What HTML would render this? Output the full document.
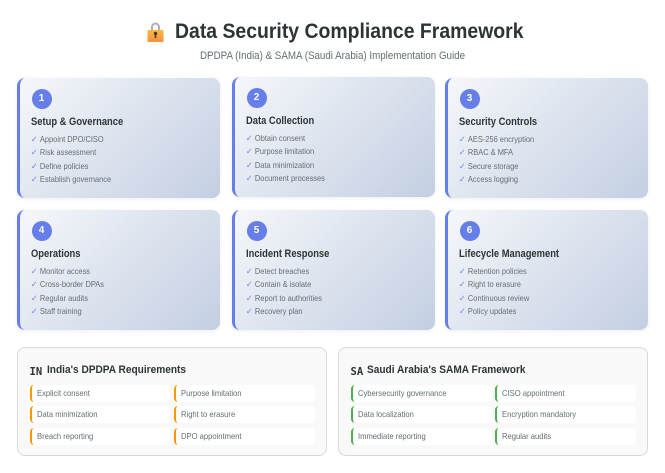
<!DOCTYPE html>
<html><head><meta charset="utf-8"><style>
*{box-sizing:border-box;margin:0;padding:0}
html,body{width:665px;height:473px;background:#fff;overflow:hidden;font-family:"Liberation Sans",sans-serif;position:relative}
.a{position:absolute;white-space:nowrap}
h1{position:absolute;left:175px;top:18px;font-size:21.500px;line-height:26px;font-weight:700;color:#2d3436;white-space:nowrap;transform:scaleX(.903);transform-origin:left top}
.sub{position:absolute;left:200px;top:49px;font-size:10.600px;line-height:14px;color:#636e72;white-space:nowrap;transform:scaleX(.923);transform-origin:left top}
.card{position:absolute;width:203px;height:120px;border-radius:8px;border-left:3px solid #667eea;background:linear-gradient(135deg,#f5f7fa 0%,#c3cfe2 100%);box-shadow:0 1px 4px rgba(0,0,0,.07)}
.n{position:absolute;left:11.500px;top:11px;width:20px;height:20px;border-radius:50%;background:#667eea;color:#fff;font-size:10px;font-weight:700;line-height:20px;text-align:center}
.t{position:absolute;left:11px;top:37px;font-size:10.600px;line-height:14px;font-weight:700;color:#2d3436;white-space:nowrap;transform:scaleX(.885);transform-origin:left top}
ul{list-style:none;position:absolute;left:11px;top:54.500px;transform:scaleX(.91);transform-origin:left top}
li{height:13.500px;line-height:13.500px;font-size:8.200px;color:#636e72;white-space:nowrap}
li b{display:inline-block;width:9.800px;font-weight:400;color:#667eea;font-family:"DejaVu Sans",sans-serif;font-size:8.500px}
.panel{position:absolute;top:347px;width:310px;height:109px;background:#f9f9f9;border:1px solid #d9d9d9;border-radius:8px}
.pt{position:absolute;top:14.500px;font-size:10.600px;line-height:14px;font-weight:700;color:#2d3436;white-space:nowrap;transform:scaleX(.955);transform-origin:left top}
.cc{position:absolute;top:17px;left:11.500px;font-family:"DejaVu Sans Mono","Liberation Mono",monospace;font-weight:700;font-size:10.500px;line-height:14px;color:#2d3436}
.i{position:absolute;width:141px;height:17px;background:#fff;border-radius:4px;border-left:2px solid #ff9800;font-size:8.200px;line-height:17px;color:#636e72;padding-left:5px;white-space:nowrap}
.i span{display:inline-block;transform:scaleX(.93);transform-origin:left center}
.g .i{border-left-color:#4caf50}
.c1{left:12px}.c2{left:156px}
.r1{top:36.500px}.r2{top:58px}.r3{top:79.500px}
</style></head><body>
<svg class="a" style="left:147px;top:22px" width="17" height="20" viewBox="0 0 17 20"><defs><linearGradient id="lk" x1="0" y1="0" x2="0" y2="1"><stop offset="0" stop-color="#fbb83e"/><stop offset="1" stop-color="#f78f3c"/></linearGradient></defs><path d="M5 9V5a3.500 3.500 0 0 1 7 0V9" fill="none" stroke="#b3aeb8" stroke-width="2"/><rect x="0.500" y="8" width="16" height="12" rx="1" fill="url(#lk)"/><circle cx="8.500" cy="11.500" r="1.700" fill="#3f3a3f"/><rect x="7.700" y="11.500" width="1.600" height="4.500" fill="#3f3a3f"/></svg>
<h1>Data Security Compliance Framework</h1>
<div class="sub">DPDPA (India) &amp; SAMA (Saudi Arabia) Implementation Guide</div>

<div class="card" style="left:17px;top:78px"><div class="n">1</div><div class="t">Setup &amp; Governance</div><ul><li><b>✓</b>Appoint DPO/CISO</li><li><b>✓</b>Risk assessment</li><li><b>✓</b>Define policies</li><li><b>✓</b>Establish governance</li></ul></div>
<div class="card" style="left:232px;top:77px"><div class="n">2</div><div class="t">Data Collection</div><ul><li><b>✓</b>Obtain consent</li><li><b>✓</b>Purpose limitation</li><li><b>✓</b>Data minimization</li><li><b>✓</b>Document processes</li></ul></div>
<div class="card" style="left:445px;top:78px"><div class="n">3</div><div class="t">Security Controls</div><ul><li><b>✓</b>AES-256 encryption</li><li><b>✓</b>RBAC &amp; MFA</li><li><b>✓</b>Secure storage</li><li><b>✓</b>Access logging</li></ul></div>
<div class="card" style="left:17px;top:210px"><div class="n">4</div><div class="t">Operations</div><ul><li><b>✓</b>Monitor access</li><li><b>✓</b>Cross-border DPAs</li><li><b>✓</b>Regular audits</li><li><b>✓</b>Staff training</li></ul></div>
<div class="card" style="left:232px;top:210px"><div class="n">5</div><div class="t">Incident Response</div><ul><li><b>✓</b>Detect breaches</li><li><b>✓</b>Contain &amp; isolate</li><li><b>✓</b>Report to authorities</li><li><b>✓</b>Recovery plan</li></ul></div>
<div class="card" style="left:445px;top:210px"><div class="n">6</div><div class="t">Lifecycle Management</div><ul><li><b>✓</b>Retention policies</li><li><b>✓</b>Right to erasure</li><li><b>✓</b>Continuous review</li><li><b>✓</b>Policy updates</li></ul></div>

<div class="panel" style="left:17px"><div class="cc">IN</div><div class="pt" style="left:29px">India's DPDPA Requirements</div>
<div class="i c1 r1"><span>Explicit consent</span></div><div class="i c2 r1"><span>Purpose limitation</span></div>
<div class="i c1 r2"><span>Data minimization</span></div><div class="i c2 r2"><span>Right to erasure</span></div>
<div class="i c1 r3"><span>Breach reporting</span></div><div class="i c2 r3"><span>DPO appointment</span></div></div>
<div class="panel g" style="left:338px"><div class="cc">SA</div><div class="pt" style="left:28px">Saudi Arabia's SAMA Framework</div>
<div class="i c1 r1"><span>Cybersecurity governance</span></div><div class="i c2 r1"><span>CISO appointment</span></div>
<div class="i c1 r2"><span>Data localization</span></div><div class="i c2 r2"><span>Encryption mandatory</span></div>
<div class="i c1 r3"><span>Immediate reporting</span></div><div class="i c2 r3"><span>Regular audits</span></div></div>
</body></html>
